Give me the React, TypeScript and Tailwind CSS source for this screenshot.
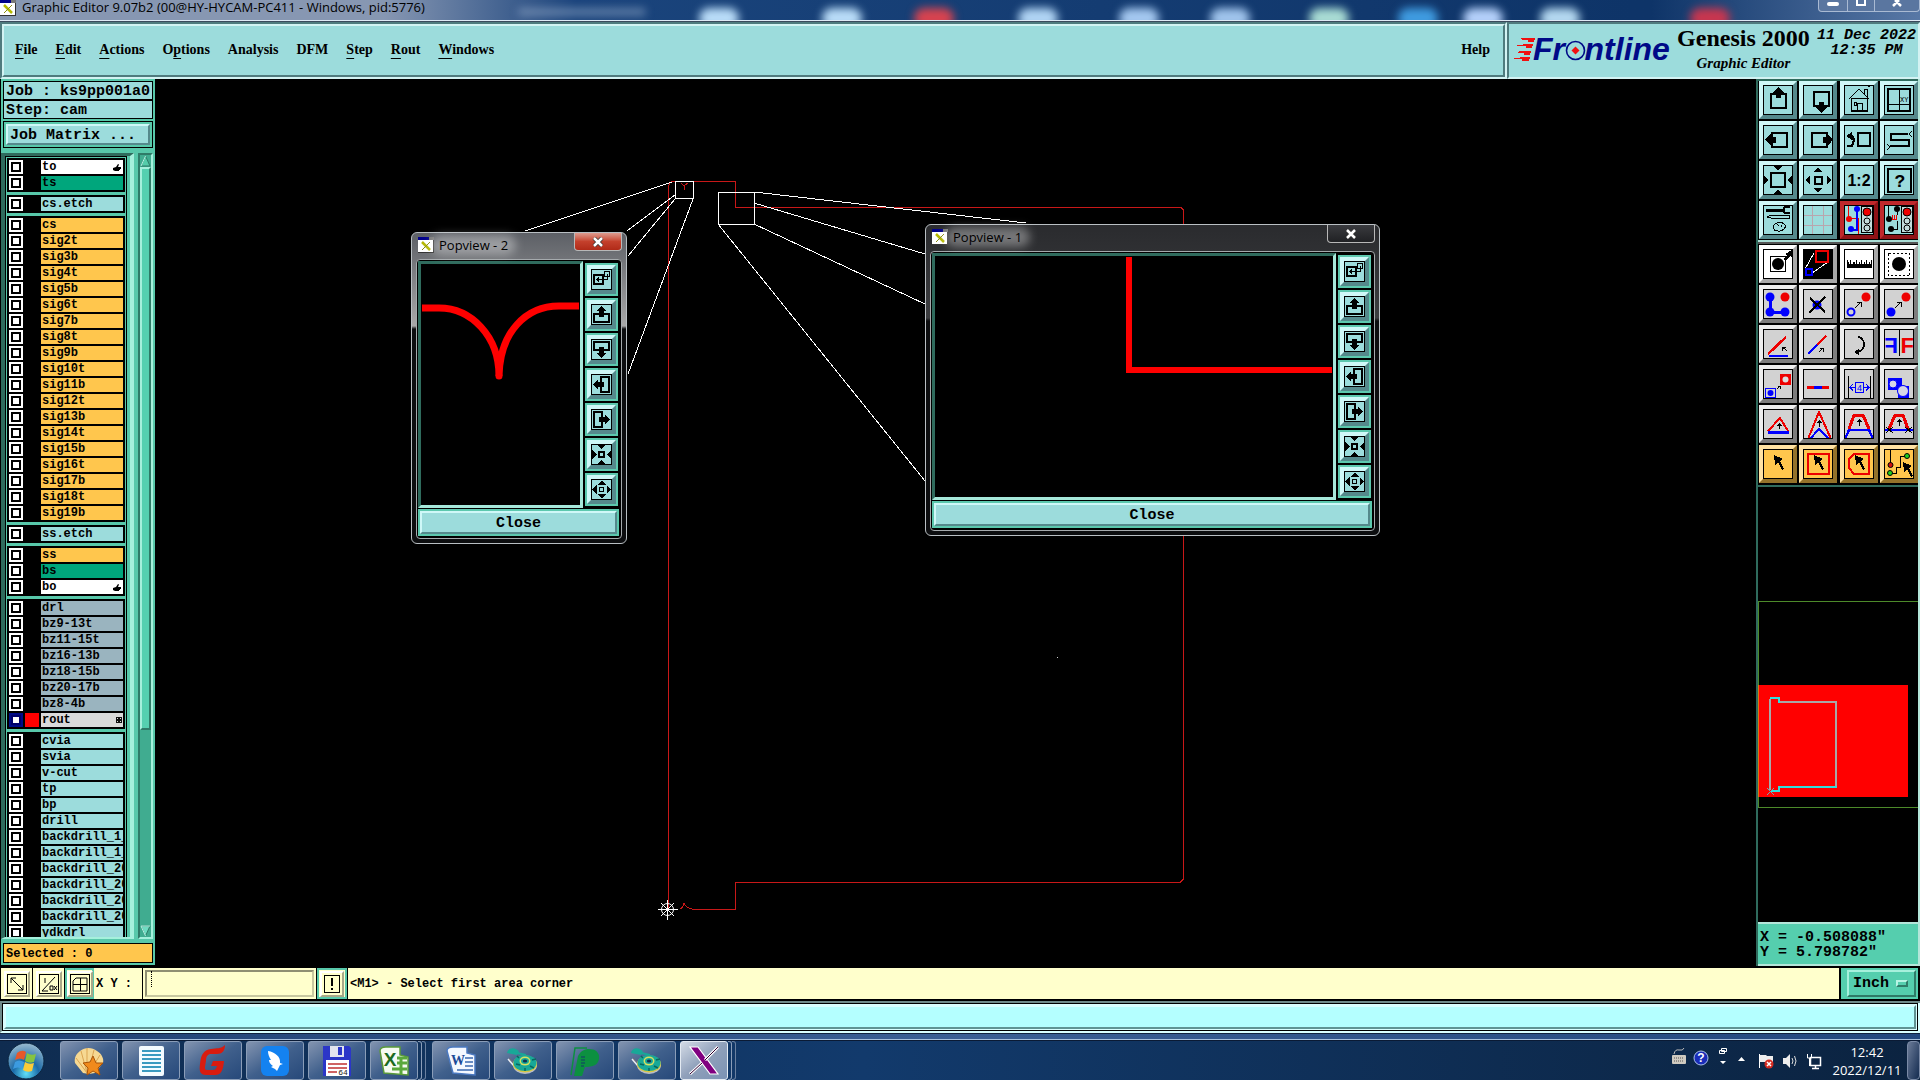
import React from "react";

const MONO = "font-['Liberation_Mono',monospace]";
const SERIF = "font-['Liberation_Serif',serif]";
const SANS = "font-['Open_Sans','Noto_Sans',sans-serif]";
const RAISED = "border-t-[#cff8f8] border-l-[#cff8f8] border-b-[#55898c] border-r-[#55898c]";

const menus: [string, number][] = [
  ["File", 0],
  ["Edit", 0],
  ["Actions", 0],
  ["Options", 1],
  ["Analysis", -1],
  ["DFM", -1],
  ["Step", 0],
  ["Rout", 0],
  ["Windows", 0],
];

function MenuLabel({ text, at }: { text: string; at: number }) {
  if (at < 0) return <>{text}</>;
  return (
    <>
      {text.slice(0, at)}
      <span className="underline decoration-1 underline-offset-4">{text[at]}</span>
      {text.slice(at + 1)}
    </>
  );
}

/* ---------- X window icon used in title bars ---------- */
function XIcon() {
  return (
    <svg width="16" height="16" viewBox="0 0 16 16" shapeRendering="crispEdges" className="shrink-0">
      <rect width="16" height="16" fill="#fff" />
      <rect width="11" height="3" fill="#00008b" />
      <rect x="11" width="5" height="3" fill="#777" />
      <path d="M4 5l8 8" stroke="#b5b800" strokeWidth="2.5" shapeRendering="auto" />
      <path d="M12 5l-8 8" stroke="#8a8c10" strokeWidth="1" shapeRendering="auto" />
      <path d="M0 15.5h16M15.5 3v13" stroke="#333" />
    </svg>
  );
}

/* ---------- title bar ---------- */
const blobs = [
  { left: "36.4%", cls: "bg-[#b9dcf8]" },
  { left: "42.8%", cls: "bg-[#b9dcf8]" },
  { left: "47.6%", cls: "bg-[#d8434f]" },
  { left: "53%", cls: "bg-[#b0d4f4]" },
  { left: "58.3%", cls: "bg-[#a4c8f0]" },
  { left: "63%", cls: "bg-[#a0c4ec]" },
  { left: "68.2%", cls: "bg-[#a9dcd4]" },
  { left: "72.8%", cls: "bg-[#3f9be0]" },
  { left: "76.2%", cls: "bg-[#b4d0fa]" },
  { left: "80.2%", cls: "bg-[#b4d8f0]" },
  { left: "88%", cls: "bg-[#c8364f]" },
];

function TitleBar() {
  return (
    <header className="relative flex h-[22px] shrink-0 items-start overflow-hidden border-b border-b-[#3b4a5c]">
      <div className="absolute inset-0 bg-linear-to-r from-[#8797b2] from-20% via-[#1a447c] via-30% to-[#0e3468] to-85%" />
      <div className="absolute inset-y-0 right-0 w-[14%] bg-linear-to-r from-transparent to-[#5878a6]" />
      {blobs.map((b) => (
        <span key={b.left} className={"absolute top-2 h-5 w-10 rounded-full blur-[4px] " + b.cls} style={{ left: b.left }} />
      ))}
      <span className="absolute top-2 left-[27%] h-2 w-32 rounded-full bg-[#9fb4d0]/50 blur-[4px]" />
      <div className="absolute inset-x-0 bottom-0 h-px bg-[#dfe9f5]" />
      <div className="relative flex h-[15px] items-center gap-1.5">
        <XIcon />
        <h1 className={SANS + " text-[13px] leading-[15px] whitespace-nowrap text-black"}>
          Graphic Editor 9.07b2 (00@HY-HYCAM-PC411 - Windows, pid:5776)
        </h1>
      </div>
      <div className="relative ml-auto flex h-3 rounded-b border border-t-0 border-[#a9bad3] bg-[#5a76a0] text-white">
        <button aria-label="Minimize" className="flex w-[29px] items-start justify-center border-r border-[#a9bad3]">
          <span className="mt-0.5 h-1 w-3 rounded-sm bg-white" />
        </button>
        <button aria-label="Maximize" className="flex w-[27px] items-start justify-center border-r border-[#a9bad3]">
          <span className="h-1.5 w-2.5 border-2 border-t-0 border-white" />
        </button>
        <button aria-label="Close window" className="flex w-[44px] items-start justify-center">
          <svg width="10" height="7" viewBox="0 0 10 7">
            <path d="M1 6l4-4 4 4M3 0l2 2 2-2" stroke="#fff" strokeWidth="2.5" fill="none" />
          </svg>
        </button>
      </div>
    </header>
  );
}

/* ---------- menu and brand header ---------- */
function Brand() {
  return (
    <div className="flex items-center pb-[3px]">
      <svg width="24" height="24" viewBox="0 0 24 24" shapeRendering="crispEdges" className="shrink-0">
        <g fill="#f01010">
          <path d="M4 2l13-1h7l-1 4h-6v-2z" />
          <path d="M3 9l12-2h7l-1 4h-6V9z" />
          <path d="M1 15l13-1h6l-1 4h-6v-2z" />
          <path d="M0 22l12-2h7l-1 4h-7v-2z" />
        </g>
      </svg>
      <span className="-ml-0.5 font-['Liberation_Sans',sans-serif] text-[32px] leading-8 font-bold text-[#000a87] italic">
        Fr
        <span className="relative text-transparent">
          o
          <svg width="21" height="21" viewBox="0 0 21 21" className="absolute bottom-1.5 left-0">
            <circle cx="10.5" cy="10.5" r="9" fill="#9cdcdc" stroke="#000a87" strokeWidth="1.6" />
            <path d="M10.5 6.5l4 4-4 4-4-4z" fill="#f01010" />
          </svg>
        </span>
        ntline
      </span>
    </div>
  );
}

function TopHeader() {
  const frame = "border-2 border-t-[#4f7b7e] border-l-[#4f7b7e] border-b-[#d3f3f3] border-r-[#d3f3f3] bg-[#9cdcdc]";
  return (
    <div className="flex h-[57px] shrink-0 bg-[#9cdcdc]">
      <nav className={"flex flex-1 " + frame}>
        <div
          className={
            "flex flex-1 items-center justify-between border-2 border-t-[#d3f3f3] border-l-[#d3f3f3] border-b-[#4f7b7e] border-r-[#4f7b7e] pr-[13px] pb-0.5 pl-[11px] text-sm font-bold text-black " +
            SERIF
          }
        >
          <div className="flex gap-[18px]">
            {menus.map(([text, at]) => (
              <button key={text} className="leading-5">
                <MenuLabel text={text} at={at} />
              </button>
            ))}
          </div>
          <button className="leading-5">Help</button>
        </div>
      </nav>
      <section className={"flex w-[413px] justify-between pr-0.5 pl-0.5 " + frame}>
        <Brand />
        <div className={"pt-0.5 text-center font-bold whitespace-nowrap text-black " + SERIF}>
          <div className="text-2xl leading-6">Genesis 2000</div>
          <div className="text-[15px] leading-[26px] italic">Graphic Editor</div>
        </div>
        <div className={"pt-1 text-center text-[15px] leading-[15px] font-bold whitespace-nowrap text-black italic " + MONO}>
          <div>11 Dec 2022</div>
          <div>12:35 PM</div>
        </div>
      </section>
    </div>
  );
}

/* ---------- layer list ---------- */
type Tone = "white" | "green" | "cyan" | "orange" | "slate" | "gray";
const tones: Record<Tone, string> = {
  white: "bg-white",
  green: "bg-[#00a67c]",
  cyan: "bg-[#9cdcdc]",
  orange: "bg-[#ffc64d]",
  slate: "bg-[#9ab4bf]",
  gray: "bg-[#dadada]",
};
type Layer = { name: string; tone: Tone; mark?: "hand" | "grid"; on?: boolean };
const many = (tone: Tone, names: string): Layer[] => names.split(" ").map((name) => ({ name, tone }));

const groups: Layer[][] = [
  [
    { name: "to", tone: "white", mark: "hand" },
    { name: "ts", tone: "green" },
  ],
  many("cyan", "cs.etch"),
  many("orange", "cs sig2t sig3b sig4t sig5b sig6t sig7b sig8t sig9b sig10t sig11b sig12t sig13b sig14t sig15b sig16t sig17b sig18t sig19b"),
  many("cyan", "ss.etch"),
  [
    { name: "ss", tone: "orange" },
    { name: "bs", tone: "green" },
    { name: "bo", tone: "white", mark: "hand" },
  ],
  [...many("slate", "drl bz9-13t bz11-15t bz16-13b bz18-15b bz20-17b bz8-4b"), { name: "rout", tone: "gray", mark: "grid", on: true }],
  many("cyan", "cvia svia v-cut tp bp drill backdrill_1_ backdrill_1_ backdrill_20 backdrill_20 backdrill_20 backdrill_20 ydkdrl"),
];

function Mark({ kind }: { kind: "hand" | "grid" }) {
  return kind === "hand" ? (
    <svg width="8" height="8" viewBox="0 0 8 8" className="absolute top-1 right-0.5">
      <path d="M0 4l3-1 2-3 1 .5L5 3h3v2H7v1H6v1H2L0 6z" fill="#000" />
    </svg>
  ) : (
    <svg width="6" height="6" viewBox="0 0 6 6" shapeRendering="crispEdges" className="absolute top-1 right-px">
      <rect width="6" height="6" fill="#111" />
      <path d="M1 1h1v1H1zM4 1h1v1H4zM1 4h1v1H1zM4 4h1v1H4z" fill="#ddd" />
    </svg>
  );
}

function LayerRow({ layer, id }: { layer: Layer; id: string }) {
  return (
    <li className="flex h-3.5 gap-0.5">
      <input
        id={id}
        type="checkbox"
        defaultChecked={layer.on}
        className="size-3.5 shrink-0 appearance-none border-2 border-white bg-white shadow-[inset_0_0_0_2px_#000] checked:border-[#000a87] checked:shadow-[inset_0_0_0_2px_#00006a]"
      />
      <span className={"size-3.5 shrink-0 " + (layer.on ? "bg-[#ff0000]" : "bg-black")} />
      <label
        htmlFor={id}
        className={
          "relative min-w-0 flex-1 overflow-hidden pl-px text-xs leading-[14px] font-bold whitespace-nowrap text-black " + MONO + " " + tones[layer.tone]
        }
      >
        {layer.name}
        {layer.mark && <Mark kind={layer.mark} />}
      </label>
    </li>
  );
}

function LeftPanel() {
  const cell = "border border-black bg-[#9cdcdc] pl-0.5 text-[15px] leading-[19px] font-bold whitespace-nowrap text-black";
  return (
    <aside className={"mb-[3px] ml-px flex w-[154px] shrink-0 flex-col bg-[#58c8aa] px-0.5 pt-0.5 pb-0.5 " + MONO}>
      <div className={"h-[19px] " + cell}>Job : ks9pp001a0</div>
      <div className={"h-[19px] " + cell}>Step: cam</div>
      <div className="mt-0.5 h-[27px] border border-black p-0.5">
        <button
          className={
            "flex h-full w-full items-center border-2 bg-[#9cdcdc] pt-[3px] pl-0.5 text-[15px] font-bold whitespace-nowrap text-black " + RAISED
          }
        >
          Job Matrix ...
        </button>
      </div>
      <div className="mt-[5px] mb-1 flex min-h-0 flex-1 gap-1">
        <div className="-ml-0.5 flex min-h-0 min-w-0 flex-1 border-t-[3px] border-r-4 border-b-2 border-l-4 border-t-[#2f6b5d] border-r-[#a6f0dc] border-b-[#a6f0dc] border-l-[#2f6b5d]">
          <div className="mr-[3px] min-h-0 min-w-0 flex-1 overflow-hidden border border-b-0 border-black px-px pt-px">
            {groups.map((g, gi) => (
              <ul key={gi} className="mb-[3px] flex flex-col gap-0.5 bg-black p-0.5">
                {g.map((l, i) => (
                  <LayerRow key={i} layer={l} id={"layer-" + gi + "-" + i} />
                ))}
              </ul>
            ))}
          </div>
        </div>
        <div className="flex w-[15px] flex-col border-2 border-t-[#2f7b68] border-r-[#a6f0dc] border-b-[#a6f0dc] border-l-[#2f7b68] bg-[#40ac90]">
          <svg width="11" height="12" viewBox="0 0 11 12">
            <path d="M5.5 1L1 11h9z" fill="#55ccaa" stroke="#2f7b68" />
            <path d="M5.5 1L1 11" stroke="#b8f4e4" />
          </svg>
          <div className="h-[563px] border-2 border-t-[#a6f0dc] border-r-[#2f7b68] border-b-[#2f7b68] border-l-[#a6f0dc] bg-[#55d0b0]" />
          <svg width="11" height="12" viewBox="0 0 11 12" className="mt-auto">
            <path d="M5.5 11L1 1h9z" fill="#6fdcc2" stroke="#2f7b68" />
            <path d="M5.5 11L1 1h9" stroke="#b8f4e4" fill="none" />
          </svg>
        </div>
      </div>
      <div className="h-5 border border-black bg-[#ffc64d] pl-0.5 text-xs leading-5 font-bold whitespace-nowrap text-black">Selected : 0</div>
    </aside>
  );
}

/* ---------- tool icons, drawn on a 30px grid ---------- */
const B = "#0000ff";
const R = "#ee0000";
const up = "M15.5 2L10 8h3v5h5V8h3z";

const viewTools: [string, React.ReactNode][] = [
  ["Pan up", <g key="a"><rect x="8" y="9" width="15" height="14" fill="none" stroke="#000" strokeWidth="2" /><path d={up} /></g>],
  ["Pan down", <g key="a"><rect x="12" y="7" width="15" height="14" fill="none" stroke="#000" strokeWidth="2" transform="translate(-1 0)" /><path d="M19.5 28L14 22h3v-5h5v5h3z" transform="translate(-1 0)" /></g>],
  ["Home", <g key="a" fill="none" stroke="#000"><path d="M5 14L15 4l10 10M7.5 13v13h16V13M7 13.5h17M20.5 9V4h3v9M24 2l2-1M13.5 26v-8M18.5 26v-8h-5M10 17.5h2.5v3H10z" /><path d="M7 26h17" strokeWidth="2" /></g>],
  ["Home XY", <g key="a"><path d="M15.5 4v21M5 19.5h21" fill="none" stroke="#000" /><path d="M4 4h22v22H4z" fill="none" stroke="#000" strokeWidth="2" /><text x="16" y="17" fontSize="7" fontFamily="Liberation Mono">XY</text></g>],
  ["Pan left", <g key="a"><rect x="9" y="8" width="15" height="14" fill="none" stroke="#000" strokeWidth="2" /><path d="M2 14.5L8 9v3h5v6H8v3z" /></g>],
  ["Pan right", <g key="a"><rect x="9" y="8" width="15" height="14" fill="none" stroke="#000" strokeWidth="2" /><path d="M30 14.5L25 9v3h-5v6h5v3z" /></g>],
  ["Previous view", <g key="a" fill="none" stroke="#000" strokeWidth="2"><rect x="14" y="8" width="12" height="13" /><path d="M4 11h4l2 4-2 6H3" strokeWidth="2.5" /><path d="M2 11l6-4v8z" fill="#000" stroke="none" /></g>],
  ["Route path", <g key="a" fill="none" stroke="#000"><path d="M24 9H7v6h18v6H6" strokeWidth="2" /><path d="M28 6l-3 3 3 3M3 19l3 3-3 3" /></g>],
  ["Zoom in", <g key="a"><rect x="8" y="8" width="14" height="14" fill="none" stroke="#000" strokeWidth="2" /><path d="M15 5l5-4H10zM15 25l5 4H10zM5 15L1 10v10zM25 15l4-5v10z" /></g>],
  ["Zoom out", <g key="a"><rect x="12" y="12" width="7" height="7" fill="none" stroke="#000" strokeWidth="2" /><path d="M15 3l5 4H10zM15 27l5-4H10zM3 15l4-5v10zM28 15l-4-5v10z" /></g>],
  ["Zoom 1:2", <text key="a" x="15" y="21" textAnchor="middle" fontSize="16" fontWeight="bold" fontFamily="Liberation Sans">1:2</text>],
  ["Help", <g key="a"><rect x="4" y="4" width="23" height="23" fill="none" stroke="#000" strokeWidth="2" /><text x="16" y="22" textAnchor="middle" fontSize="18" fontWeight="bold" fontFamily="Liberation Mono">?</text></g>],
  ["Setup", <g key="a" fill="none" stroke="#000"><path d="M3 5h17" strokeWidth="3" /><path d="M27 2h-5l-2 3 2 3h5" strokeWidth="2" /><path d="M4 12l4-2h18v3H8zM11 24c-3-5 6-9 10-5 4 3-2 8-6 7s-3 0-4-2zM14 19l2 2M18 22l1-2" /></g>],
  ["Grid", <path key="a" d="M9.5 0v30M20.5 0v30M0 10.5h30M0 20.5h30" stroke="#b9a5ae" fill="none" />],
];

const trafficTools: [string, React.ReactNode][] = [
  ["Online check", <g key="a"><path d="M4.5 0v13.5h10V30" fill="none" stroke={R} /><circle cx="5" cy="14" r="3" fill={R} /><path d="M13 5v20H6" fill="none" stroke={B} strokeWidth="2" /><circle cx="13" cy="4" r="3" fill={B} /><circle cx="7" cy="24" r="3" fill={B} /></g>],
  ["Net check", <g key="a"><path d="M4.5 0v13M13 5v5M13 16v8H7" fill="none" stroke="#000" /><path d="M5 14.5h8M8.5 10v4M10.5 10v4M12.5 10v4" fill="none" stroke={R} /><circle cx="5" cy="14" r="3" /><circle cx="13" cy="4" r="3" /><circle cx="7" cy="24" r="3" /></g>],
];
const lights = (
  <g>
    <rect x="17.5" y="1.5" width="11" height="26" fill="#c4dcdc" stroke="#000" />
    <circle cx="23" cy="7" r="4" fill={R} stroke="#000" />
    <circle cx="23" cy="16" r="3" fill="none" stroke="#000" />
    <circle cx="23" cy="23" r="3" fill="none" stroke="#000" />
  </g>
);

const whiteTools: [string, React.ReactNode][] = [
  ["Feature info", <g key="a"><rect x="7.5" y="7.5" width="15" height="15" fill="none" stroke="#000" /><circle cx="15" cy="15" r="6" /><path d="M20 10l4-4-2-1 7-4v7l-2-1-4 5z" /></g>],
  ["Popview", <g key="a"><rect width="30" height="30" /><path d="M11 4L2 20M25 13L9 24" stroke="#fff" /><rect x="13" y="2" width="12" height="11" fill="none" stroke={R} strokeWidth="2" /><rect x="3" y="20" width="6" height="6" fill="none" stroke={B} strokeWidth="2" /></g>],
  ["Ruler", <path key="a" d="M3 11v8h25v-8h-1v4h-1v-2h-1v2h-2v-4h-1v4h-1v-2h-1v2h-2v-4h-1v4h-1v-2h-1v2h-2v-4h-1v4h-1v-2H9v2H7v-4H6v4H5v-2H4v-2z" />],
  ["Select feature", <g key="a"><rect x="4.5" y="4.5" width="21" height="22" fill="none" stroke="#000" strokeDasharray="2 2" /><circle cx="15" cy="15" r="7" /></g>],
];

const editTools: [string, React.ReactNode][] = [
  ["Copy feature", <g key="a"><path d="M7 9v15h15" stroke={B} strokeWidth="3" fill="none" /><circle cx="7" cy="9" r="4.5" fill={B} /><circle cx="7" cy="24" r="4.5" fill={B} /><circle cx="22" cy="24" r="4.5" fill={B} /><circle cx="22" cy="9" r="4.5" fill={R} /></g>],
  ["Delete feature", <g key="a"><circle cx="14" cy="17" r="4.5" fill={B} /><path d="M7 10l15 14M22 9L6 25" stroke="#000" strokeWidth="2" /></g>],
  ["Move feature", <g key="a"><circle cx="7" cy="24" r="3.5" fill="none" stroke={B} strokeWidth="2" /><circle cx="22" cy="9" r="4.5" fill={R} /><path d="M11 20l6-6m-4 .5h4.5v4" stroke="#000" fill="none" /></g>],
  ["Copy to", <g key="a"><circle cx="7" cy="24" r="4.5" fill={B} /><circle cx="22" cy="9" r="4.5" fill={R} /><path d="M11 20l6-6m-4 .5h4.5v4" stroke="#000" fill="none" /></g>],
  ["Rotate", <g key="a"><path d="M5 26L23 9" stroke={R} strokeWidth="2.5" /><path d="M6 28h19" stroke={B} strokeWidth="2" /><path d="M24 23l-4.5-4m0 3.5v-3h3" stroke="#000" fill="none" /></g>],
  ["Extend", <g key="a"><path d="M5 26l9-9" stroke={B} strokeWidth="2.5" /><path d="M14 17l9-9" stroke={R} strokeWidth="2.5" /><path d="M16 24l4-4m-3 .5h3.5v3" stroke="#000" fill="none" /></g>],
  ["Turn", <g key="a"><path d="M14 9c7 1 9 12 0 15" stroke="#000" strokeWidth="2" fill="none" /><path d="M10 24l5-3v6z" /></g>],
  ["Mirror", <g key="a"><path d="M15.5 2v26" stroke="#000" /><g transform="scale(-1 1)"><text x="-14" y="25" fontSize="22" fontWeight="bold" fill={B} fontFamily="Liberation Sans">F</text></g><text x="16.5" y="25" fontSize="22" fontWeight="bold" fill={R} fontFamily="Liberation Sans">F</text></g>],
  ["Resize", <g key="a"><rect x="2.5" y="20.5" width="10" height="9" fill="none" stroke={B} /><circle cx="7.5" cy="25" r="3" fill={B} /><path d="M17 6h11v11H17z" fill={R} /><circle cx="22.5" cy="11.5" r="3" fill="#ddd" /><path d="M14 21l3-3m-2 .5h2.5v2" stroke="#000" fill="none" /></g>],
  ["Merge lines", <g key="a"><path d="M4 19h22" stroke={R} strokeWidth="3" /><path d="M11 19h8" stroke={B} strokeWidth="3" /></g>],
  ["Step and repeat", <g key="a"><path d="M4.5 8v22M26.5 8v22" stroke="#000" /><path d="M6 19.5h6m8 0h6M9 16l-3 3.5 3 3M22 16l3 3.5-3 3" stroke={B} fill="none" /><rect x="11.5" y="14.5" width="8" height="10" fill="none" stroke={B} /><text x="15.5" y="23" textAnchor="middle" fontSize="9" fill={B} fontFamily="Liberation Sans">4</text></g>],
  ["Contour", <g key="a"><path d="M4 10h14v8h7v12H14v-8H4z" fill={B} /><circle cx="9" cy="16" r="4" fill="#d6d6e6" stroke={B} /><circle cx="19" cy="23" r="5.5" fill="#d6d6e6" stroke={B} /></g>],
  ["Triangle", <g key="a"><path d="M5 22L17 9l8 13" stroke={R} strokeWidth="2" fill="none" /><path d="M5 23h21" stroke={B} strokeWidth="3" /><path d="M16.5 20v-5m-2 2l2-2 2 2" stroke="#000" fill="none" /></g>],
  ["Peak", <g key="a"><path d="M5 30L16 3l12 27" stroke={R} strokeWidth="2" fill="none" /><path d="M7 30l9-10 10 10" stroke={B} strokeWidth="2" fill="none" /><path d="M16.5 18v-6m-2 2l2-2 2 2" stroke="#000" fill="none" /></g>],
  ["Trapezoid", <g key="a"><path d="M5 20L10 6h9l6 14" stroke={R} strokeWidth="3" fill="none" /><path d="M1 30l4-9h20l4 9" stroke={B} strokeWidth="2.5" fill="none" /><path d="M15.5 17v-6m-2 2l2-2 2 2" stroke="#000" fill="none" /></g>],
  ["Trim", <g key="a"><path d="M5 20L11 6h8l5 14" stroke={R} strokeWidth="3" fill="none" /><path d="M0 21h30" stroke={B} strokeWidth="2" /><path d="M2 18l7 6M9 18l-7 6M21 18l7 6M28 18l-7 6M15.5 17v-6m-2 2l2-2 2 2" stroke="#000" fill="none" /></g>],
];

const arrow = "M11 6l9 4-3 2 4 8-2 1-4-8-3 3z";
const selectTools: [string, React.ReactNode][] = [
  ["Select", <path key="a" d={arrow} />],
  ["Select rectangle", <g key="a"><rect x="5" y="5" width="21" height="20" fill="none" stroke={R} strokeWidth="2" /><path d={arrow} /></g>],
  ["Select polygon", <g key="a"><path d="M10 5h15v20H10l-5-6v-9z" fill="none" stroke={R} strokeWidth="2" /><path d={arrow} /></g>],
  ["Select net", <g key="a"><path d="M6.5 0v16M6 24.5h6.5v-6h4V7.500h6" stroke="#000" fill="none" /><circle cx="6.5" cy="16" r="2.5" fill="#d01010" stroke="#000" /><circle cx="6" cy="24" r="2.5" fill="#20d020" stroke="#000" /><circle cx="23" cy="7" r="2.5" fill="#20d020" stroke="#000" /><path d={arrow} transform="translate(8 7)" /></g>],
];

function Tool({ label, look, children }: { label: string; look: string; children: React.ReactNode }) {
  return (
    <button aria-label={label} className={"size-[38px] border-4 " + look}>
      <svg width="30" height="30" viewBox="0 0 30 30" shapeRendering="crispEdges" className="block [&_circle]:[shape-rendering:auto]">
        {children}
        <rect x="0.5" y="0.5" width="29" height="29" fill="none" stroke="#000" />
      </svg>
    </button>
  );
}

function RightPanel() {
  const cyan = "bg-[#9cdcdc] " + RAISED;
  const red = "bg-[#9cdcdc] border-t-[#c0282c] border-l-[#c0282c] border-b-[#8e1216] border-r-[#8e1216]";
  const white = "bg-white border-t-white border-l-white border-b-[#a8a8a8] border-r-[#a8a8a8]";
  const gray = "bg-[#d2d2d2] border-t-[#eeeeee] border-l-[#eeeeee] border-b-[#7d7d7d] border-r-[#7d7d7d]";
  const orange = "bg-[#ffc64d] border-t-[#ffe2a3] border-l-[#ffe2a3] border-b-[#94722a] border-r-[#94722a]";
  return (
    <aside className="mb-0.5 flex w-[164px] shrink-0 flex-col border-r-2 border-l-2 border-r-[#b4e6da] border-l-[#2f6b5d]">
      <div className="grid grid-cols-4 gap-0.5 border-t-2 border-b-2 border-t-[#2f6b5d] border-b-[#a9ddd5] bg-black pb-px pl-px">
        {viewTools.map(([l, d]) => (
          <Tool key={l} label={l} look={cyan}>{d}</Tool>
        ))}
        {trafficTools.map(([l, d]) => (
          <Tool key={l} label={l} look={red}>
            {d}
            {lights}
          </Tool>
        ))}
      </div>
      <div className="grid grid-cols-4 gap-0.5 border-t-2 border-b-2 border-t-[#555555] border-b-[#2f6b5d] bg-black pt-px pb-0.5 pl-px">
        {whiteTools.map(([l, d]) => (
          <Tool key={l} label={l} look={white}>{d}</Tool>
        ))}
        {editTools.map(([l, d], i) => (
          <Tool key={l} label={l} look={gray}>
            <g transform={i < 12 ? "translate(0 -1)" : undefined}>{d}</g>
          </Tool>
        ))}
        {selectTools.map(([l, d]) => (
          <Tool key={l} label={l} look={orange}>{d}</Tool>
        ))}
      </div>
      <svg className="min-h-0 w-full flex-1 bg-black" shapeRendering="crispEdges">
        <rect x="0.5" y="114.5" width="162" height="206" fill="none" stroke="#4d8a2a" />
        <rect x="0" y="198" width="150" height="112" fill="#ff0000" />
        <path d="M0.5 198v112" stroke="#d87a10" />
        <path d="M12 303V212M78 215v86M21 215h58" stroke="#a8a8a8" strokeWidth="2" fill="none" />
        <path d="M12 211h9v5M79 300H21v4h-8" stroke="#30dede" strokeWidth="2" fill="none" />
        <path d="M9 301l7 7M16 301l-7 7" stroke="#70a8b0" />
      </svg>
      <div
        className={
          "h-[44px] border-2 border-t-[#b4e6da] border-l-0 border-r-0 border-b-[#b4e6da] bg-[#55ceae] pt-1.5 pl-0.5 text-[15px] leading-[15px] font-bold whitespace-pre text-black " +
          MONO
        }
      >
        <div>X = -0.508088"</div>
        <div>Y = 5.798782"</div>
      </div>
    </aside>
  );
}

/* ---------- popview windows ---------- */
const smallUp = "M10.5 2L6 6v1h2v6h5V7h2V6z";
const smallBox = <path d="M8 10H3v8h15v-8h-5" fill="none" stroke="#000" strokeWidth="2" />;
const popIcons: [string, React.ReactNode][] = [
  ["Swap view", <g key="a" fill="none" stroke="#000"><rect x="3" y="6" width="9" height="9" strokeWidth="2" /><rect x="13.5" y="2.5" width="5" height="5" /><path d="M16.5 5v5.5H6m2-2l-2 2 2 2" /></g>],
  ["Pan up", <g key="a">{smallBox}<path d={smallUp} /></g>],
  ["Pan down", <g key="a" transform="rotate(180 10.5 10.5)">{smallBox}<path d={smallUp} /></g>],
  ["Pan left", <g key="a" transform="rotate(-90 10.5 10.5)">{smallBox}<path d={smallUp} /></g>],
  ["Pan right", <g key="a" transform="rotate(90 10.5 10.5)">{smallBox}<path d={smallUp} /></g>],
  ["Zoom in", <g key="a"><rect x="8" y="8" width="5" height="5" fill="none" stroke="#000" strokeWidth="2" /><path d="M10.5 5.5l4.500-5H6zM10.5 15.5l4.500 5H6zM5.5 10.5L1 6v9zM15.5 10.5L20 6v9z" /></g>],
  ["Zoom out", <g key="a"><rect x="8.5" y="8.5" width="4" height="4" fill="none" stroke="#000" /><path d="M10.5 1.5l4.500 4.500H6zM10.5 19.5l4.500-4.500H6zM1 10.5l4.500-4.500v9zM20 10.5l-4.500-4.500v9z" /></g>],
];

function Popview({ title, place, glass, closeLook, children }: { title: string; place: string; glass: string; closeLook: string; children: React.ReactNode }) {
  return (
    <section className={"absolute flex flex-col rounded-md border border-[#b9bfc3] px-1 pb-1 " + place + " " + glass}>
      <div className="relative flex h-[26px] items-center gap-[5px] pb-0.5 pl-0.5">
        <XIcon />
        <h2 className={"relative text-[13px] leading-4 text-black " + SANS}>
          <span className="absolute -inset-x-2 -inset-y-0.5 rounded-full bg-white/35 blur-[5px]" />
          <span className="relative">{title}</span>
        </h2>
        <button
          aria-label={"Close " + title}
          className={"absolute top-0 right-0 flex h-[18px] w-12 items-center justify-center rounded-b-[4px] border border-t-0 border-[#b8b8b8] " + closeLook}
        >
          <svg width="12" height="10" viewBox="0 0 12 10">
            <path d="M2 1l8 8M10 1L2 9" stroke="#333" strokeWidth="4" />
            <path d="M2 1l8 8M10 1L2 9" stroke="#fff" strokeWidth="2.5" />
          </svg>
        </button>
      </div>
      <div className="flex flex-col gap-px rounded-sm border border-[#a5aaad] bg-black p-px pb-0.5">
        <div className="flex gap-0.5 pr-0.5">
          <div className="h-[247px] min-w-0 flex-1 border-[3px] border-t-[#2f6b5d] border-r-[#a6e8da] border-b-[#a6e8da] border-l-[#2f6b5d]">
            <svg className="block h-full w-full">{children}</svg>
          </div>
          <div className="flex flex-col gap-0.5 py-0.5">
            {popIcons.map(([l, d]) => (
              <div key={l} className="border-2 border-[#5cc8ae]">
                <button aria-label={l} className={"block size-[29px] border-4 bg-[#9cdcdc] " + RAISED}>
                  <svg width="21" height="21" viewBox="0 0 21 21" shapeRendering="crispEdges" className="block">
                    {d}
                    <rect x="0.5" y="0.5" width="20" height="20" fill="none" stroke="#000" />
                  </svg>
                </button>
              </div>
            ))}
          </div>
        </div>
        <div className="mr-px h-[27px] border-2 border-[#5cc8ae]">
          <button className={"block h-full w-full border-2 bg-[#9cdcdc] text-[15px] leading-[21px] font-bold text-black " + MONO + " " + RAISED}>Close</button>
        </div>
      </div>
    </section>
  );
}

function Canvas() {
  return (
    <main className="relative min-w-0 flex-1 overflow-hidden bg-black">
      <svg className="absolute inset-0 h-full w-full" shapeRendering="crispEdges">
        <g transform="translate(-155 -79)" fill="none">
          <path
            d="M668.5 908V188q0-7 7-7h60v26h445l3 3v669l-3 3H735.5v27H692q-6-1-8-6-1 5-4 6"
            stroke="#c81818"
          />
          <path d="M681 183l3 3v4M688 183l-4 3" stroke="#c81818" />
          <path d="M675.5 181.5h18v17h-18zM718.5 192.5h36v32h-36z" stroke="#fff" />
          <path
            d="M672 182L525 231M675 195L627 231M675 199L628 256M693 199L628 374M754 192L1026 223M754 203L925 254M754 224L925 304M718 224L925 481"
            stroke="#fff"
          />
          <g stroke="#fff" shapeRendering="auto">
            <circle cx="667.5" cy="909.5" r="6" />
            <path d="M658 909.5h20M667.5 900v20M661 903l13 13M674 903l-13 13" />
          </g>
          <path d="M1057 657.5h1" stroke="#ccc" />
        </g>
      </svg>
      <Popview
        title="Popview - 2"
        place="top-[153px] left-[256px] w-[216px]"
        glass="bg-linear-to-b from-[#5d6066] from-0% via-[#a8a8a8] via-30% to-[#0c0d0f] to-31%"
        closeLook="bg-linear-to-b from-[#dc9a8e] from-0% via-[#c4402c] via-50% to-[#b02a18]"
      >
        <path d="M1 44H18C50 44 78 72 78 112M158 42H138C105 42 79 68 78 112" stroke="#ff0000" strokeWidth="7" fill="none" />
        <circle cx="78" cy="112" r="3.5" fill="#ff0000" />
      </Popview>
      <Popview
        title="Popview - 1"
        place="top-[145px] left-[770px] w-[455px]"
        glass="bg-linear-to-b from-[#2a2b2e] from-0% via-[#3c3d40] via-30% to-[#0c0d0f] to-31%"
        closeLook="bg-linear-to-b from-[#3a3b3f] to-[#202124]"
      >
        <path d="M194 1v113h203" stroke="#ff0000" strokeWidth="6" fill="none" />
      </Popview>
    </main>
  );
}

/* ---------- command line ---------- */
function CommandRow() {
  const small = "flex h-[31px] items-center justify-center border-2 bg-[#ffffcc]";
  const raised = "border-2 border-t-white border-l-white border-r-[#a8a888] border-b-[#a8a888]";
  const glyph = (d: React.ReactNode) => (
    <svg width="20" height="20" viewBox="0 0 20 20" fill="none" stroke="#000">
      <rect x="0.5" y="0.5" width="19" height="19" />
      {d}
    </svg>
  );
  return (
    <div className={"flex h-[33px] shrink-0 bg-black pb-0.5 pl-px text-xs font-bold text-black " + MONO}>
      <div className="flex gap-px">
        <button aria-label="Snap corner" className={small + " w-[31px] border-[#ffffcc]"}>
          <span className={raised + " p-px"}>{glyph(<path d="M4 4l12 12M4 9V4h5M16 11v5h-5" />)}</span>
        </button>
        <button aria-label="Snap angle" className={small + " w-[31px] border-[#ffffcc]"}>
          <span className={raised + " p-px"}>{glyph(<path d="M16 3L3 17h6M6 4v5M11 12h3v4h-3zM15 12l3 4M18 12l-3 4" />)}</span>
        </button>
        <button aria-label="Grid" className={small + " w-[29px] border-[#58c8aa]"}>
          <span className={raised + " p-px"}>{glyph(<path d="M6 4h11v13H3V7zM10.5 4v13M3 10.5h14" />)}</span>
        </button>
      </div>
      <label htmlFor="xy" className="flex w-12 items-center bg-[#ffffcc] pl-0.5 text-xs whitespace-nowrap">
        X Y :
      </label>
      <div className="ml-px w-[173px] bg-[#ffffcc] p-0.5">
        <input
          id="xy"
          defaultValue=""
          className="block h-full w-full border-2 border-t-[#8f8f72] border-r-[#c8c8a0] border-b-[#c8c8a0] border-l-[#8f8f72] bg-[#ffffcc] px-1 outline-none"
        />
        <div className="pointer-events-none relative">
          <span className="absolute -top-[26px] left-[6px] h-4 border-l border-dotted border-black" />
        </div>
      </div>
      <button aria-label="Alert" className={small + " ml-px w-[30px] border-[#58c8aa]"}>
        <span className={raised + " p-0.5"}>
          <svg width="16" height="18" viewBox="0 0 16 18" fill="none" stroke="#000">
            <rect x="0.5" y="0.5" width="15" height="17" />
            <path d="M8 3v8M8 13v2" strokeWidth="2" />
          </svg>
        </span>
      </button>
      <output className="ml-px flex flex-1 items-center bg-[#ffffcc] pl-0.5">&lt;M1&gt; - Select first area corner</output>
      <div className="mr-0.5 ml-0.5 w-[77px] bg-[#55ceae] py-0.5 pr-0.5 pl-1.5">
        <button
          aria-haspopup="listbox"
          className="flex h-full w-full items-center justify-between border-2 border-t-[#a6f0dc] border-r-[#2f7b68] border-b-[#2f7b68] border-l-[#a6f0dc] pr-1.5 pl-1 text-[15px]"
        >
          Inch
          <span className="h-[7px] w-3 border-2 border-t-[#b8f4e4] border-r-[#2f7b68] border-b-[#2f7b68] border-l-[#b8f4e4]" />
        </button>
      </div>
    </div>
  );
}

/* ---------- taskbar ---------- */
const reel = (
  <g>
    <path d="M0 8c1-6 9-6 12-1l-2 3z" fill="#18a898" />
    <path d="M2 12l8 8-1 3-7-6z" fill="#666b80" />
    <path d="M1 14l6 7" stroke="#e8ecf4" strokeWidth="1.5" />
    <ellipse cx="18" cy="20" rx="12" ry="9" fill="#b9bcc8" />
    <ellipse cx="18" cy="19" rx="12" ry="8.5" fill="#d8c840" />
    <ellipse cx="18" cy="18" rx="11.5" ry="8" fill="#18a898" />
    <ellipse cx="18" cy="16" rx="5.5" ry="4.5" fill="#d8e060" />
    <ellipse cx="18" cy="16" rx="4" ry="3" fill="#18a898" />
    <ellipse cx="18" cy="16" rx="2.2" ry="1.6" fill="#103050" />
    <path d="M9 19l4 1M23 21l4 2M18 23v3M25 15l4-1M12 13l-2-2" stroke="#086860" strokeWidth="1.5" />
    <path d="M10 8l9 2" stroke="#18a898" strokeWidth="2" />
  </g>
);
const tasks: [string, React.ReactNode, string?][] = [
  ["Shell", <g key="a"><path d="M16 29l-6-1-8-10c-1-5 1-9 5-12 5-4 12-4 17 0 5 3 7 8 6 12l-8 10z" fill="#f6d892" /><path d="M14 28L3 13M14 28L8 6M14 28V3M15 28l6-23M16 28l11-18" stroke="#dba552" /><path d="M20 11l3 7 7 0-5 5 2 7-7-4-6 4 1-7-5-5 7-1z" fill="#f08a1c" stroke="#a85408" /></g>],
  ["Notes", <g key="a"><rect x="4" y="1" width="25" height="30" rx="2" fill="#f4fbff" /><path d="M7 6h19M7 10h19M7 14h19M7 18h19M7 22h19M7 26h19" stroke="#3a9ac0" strokeWidth="2" /></g>],
  ["Genesis", <path key="a" d="M28 0c0 6-3 9-8 9h-6c-3 0-5 2-5 7-1 6-2 9 1 9h6c2 0 3-1 4-4h-6l2-5h11c-1 10-3 14-9 14H9c-6 0-7-4-6-11C4 9 7 5 14 4c6-1 10 0 14-4z" fill="#d81c10" />],
  ["Bird", <g key="a"><rect x="2" y="1" width="28" height="30" rx="6" fill="#1482f0" /><path d="M9 6c7 1 13 6 12 12l3 1-3 1-3 6-2-2-4-2 2-1c-3-2-4-4-4-6l2 0c-2-3-3-6-3-9z" fill="#fff" /></g>],
  ["Floppy", <g key="a"><path d="M2 1h26l2 2v28H2z" fill="#2b36c8" /><rect x="9" y="1" width="14" height="11" fill="#e2e4ee" /><rect x="17" y="2" width="4" height="8" fill="#2b36c8" /><rect x="5" y="15" width="23" height="16" fill="#fff" /><path d="M7 19h19M7 23h19M7 27h9" stroke="#c03030" strokeWidth="1.5" /><text x="22" y="30" textAnchor="middle" fontSize="8" fill="#222" fontFamily="Liberation Mono">64</text></g>],
  ["Excel", <g key="a"><path d="M2 6C2 3 4 2 8 2h14v8l8 2v18l-24-2z" fill="#f6faf2" stroke="#5a9a3a" strokeWidth="1.5" /><path d="M19 13h10M19 18h10M14 24h15M23 12v17" stroke="#5aa83c" strokeWidth="3" /><text x="12" y="21" textAnchor="middle" fontSize="19" fontWeight="bold" fill="#1c6a20" fontFamily="Liberation Sans">X</text></g>, "stack"],
  ["Word", <g key="a"><path d="M2 6C2 3 4 2 8 2h14v6l8 2v20l-22-2z" fill="#f4f8ff" stroke="#4a78c0" strokeWidth="1.5" /><path d="M20 13h8M20 17h8M20 21h8M12 25h16" stroke="#3a68b0" strokeWidth="1.5" /><text x="13" y="20" textAnchor="middle" fontSize="14" fontWeight="bold" fill="#1c4a98" fontFamily="Liberation Serif">W</text></g>],
  ["Reel 1", reel],
  ["PDF", <g key="a"><path d="M18 3H6L2 30" fill="none" stroke="#0c9040" strokeWidth="1.5" /><path d="M9 11c3-5 6-7 11-7 8 0 11 5 10 10-1 6-6 8-14 8l-3 9H5z" fill="#0c9040" /><path d="M12 12h4M12 15h4M12 18h4M12 21h3" stroke="#12386a" /></g>],
  ["Reel 2", reel],
  ["X server", <g key="a"><path d="M2 2h8l20 27h-8z" fill="#800080" stroke="#fff" strokeWidth="1.2" /><path d="M30 2L17 15M14 18L2 29" stroke="#fff" strokeWidth="3" /><path d="M30 2L17 15M14 18L2 29" stroke="#300030" strokeWidth="1" /></g>, "active"],
];

function TaskBar() {
  return (
    <footer className="shrink-0">
      <div className="h-[7px] border-t border-b border-t-[#10233f] border-b-[#a6c0dd] bg-linear-to-r from-[#1f4274] via-[#3a5f94] to-[#22487e]" />
      <div className="flex h-10 items-stretch border-t border-[#0a1a34] bg-linear-to-r from-[#0f2c50] from-0% via-[#123a6c] via-45% to-[#0b2340] text-white">
        <button aria-label="Start" className="flex w-[60px] items-center pl-1.5">
          <svg width="40" height="38" viewBox="0 0 40 38">
            <defs>
              <radialGradient id="orb" cx="50%" cy="85%" r="80%">
                <stop offset="0" stopColor="#5fe0f8" />
                <stop offset=".45" stopColor="#1b6aa8" />
                <stop offset="1" stopColor="#8fb4cc" />
              </radialGradient>
            </defs>
            <circle cx="20" cy="19" r="18" fill="url(#orb)" stroke="#0a2540" />
            <path d="M11 11q5-4 9-1l-2 8q-4-3-9 0z" fill="#e8582a" />
            <path d="M21 11q4 3 9 1l-2 8q-5 2-9-1z" fill="#86c440" />
            <path d="M9 20q4-3 9 0l-2 7q-4-3-9 0z" fill="#3c9be0" />
            <path d="M19 20q4 3 9 1l-2 8q-5 2-9-1z" fill="#fccc38" />
          </svg>
        </button>
        <div className="flex gap-1">
          {tasks.map(([label, art, kind]) => (
            <div key={label} className="flex w-[58px]">
              <button
                aria-label={label}
                className={
                  "flex flex-1 items-center justify-center rounded-[3px] border " +
                  (kind === "active"
                    ? "border-[#e3eaf2] bg-linear-to-br from-[#d4dbe6] via-[#8fa0ba] to-[#7c93b4]"
                    : "border-[#8a9db8] bg-linear-to-br from-[#8394b0] via-[#40608c] to-[#27497a]")
                }
              >
                <svg width="32" height="32" viewBox="0 0 32 32" className="block">{art}</svg>
              </button>
              {kind && (
                <>
                  <span className="w-1 rounded-r-[3px] border border-l-0 border-[#8a9db8]" />
                  <span className="mr-0.5 w-1 rounded-r-[3px] border border-l-0 border-[#6a80a0]" />
                </>
              )}
            </div>
          ))}
        </div>
        <div className="ml-auto flex items-center">
          <svg width="156" height="30" viewBox="0 0 156 30" fill="none">
            <path d="M3 8q1-5 5-4t5-2" stroke="#bbb" />
            <rect x="1" y="9" width="14" height="9" rx="1" fill="#cfcac0" />
            <path d="M3 12h10M3 15h10" stroke="#555" strokeDasharray="1 1" />
            <circle cx="30" cy="12" r="7" fill="#1a2cb8" stroke="#aac0e8" />
            <text x="30" y="16" textAnchor="middle" fontSize="12" fontWeight="bold" fill="#fff" fontFamily="Liberation Sans">?</text>
            <path d="M50.5 2.5h5v3h-5zM48.5 4.5h5v3h-5z" stroke="#fff" />
            <path d="M49 15h6l-3 3zM67 15h7l-3.500-4z" fill="#fff" />
            <path d="M88.5 8v14" stroke="#fff" />
            <path d="M89 9h6l1 1h6v7h-6l-1-1h-6z" fill="#eee" />
            <circle cx="98" cy="18" r="4.5" fill="#d42a20" />
            <path d="M96 16l4 4M100 16l-4 4" stroke="#fff" strokeWidth="1.5" />
            <path d="M112 12h3l4-4v14l-4-4h-3z" fill="#eee" />
            <path d="M121 12q2 3 0 6M123.5 10q3 5 0 10" stroke="#ddd" />
            <path d="M139.5 11.5h10v8h-10zM144.5 20v2M141 22.5h7" stroke="#fff" strokeWidth="1.5" />
            <path d="M136.5 8v4h4V8M138.5 12v8" stroke="#fff" />
          </svg>
          <div className={"w-[80px] text-center text-[13px] leading-[18px] text-white " + SANS}>
            <div>12:42</div>
            <div>2022/12/11</div>
          </div>
        </div>
        <button aria-label="Show desktop" className="w-[13px] rounded-sm border border-[#7a8aa6] bg-linear-to-br from-[#6c7c98] to-[#142c50]" />
      </div>
    </footer>
  );
}

export default function App() {
  return (
    <div className="flex h-screen w-full flex-col overflow-hidden bg-black">
      <TitleBar />
      <TopHeader />
      <div className="flex min-h-0 flex-1">
        <LeftPanel />
        <Canvas />
        <RightPanel />
      </div>
      <CommandRow />
      <div className="flex h-8 shrink-0 flex-col border-t-2 border-b-2 border-l-2 border-t-[#6f8a8a] border-b-[#d9ffff] border-l-[#6f8a8a] bg-[#d9ffff] pr-0.5">
        <div className="flex-1 border border-black bg-[#d9ffff] p-px">
          <div className="h-full border-2 border-t-[#d9ffff] border-r-[#5f9494] border-b-[#5f9494] border-l-[#d9ffff] bg-[#b4ffff]" />
        </div>
      </div>
      <TaskBar />
    </div>
  );
}
